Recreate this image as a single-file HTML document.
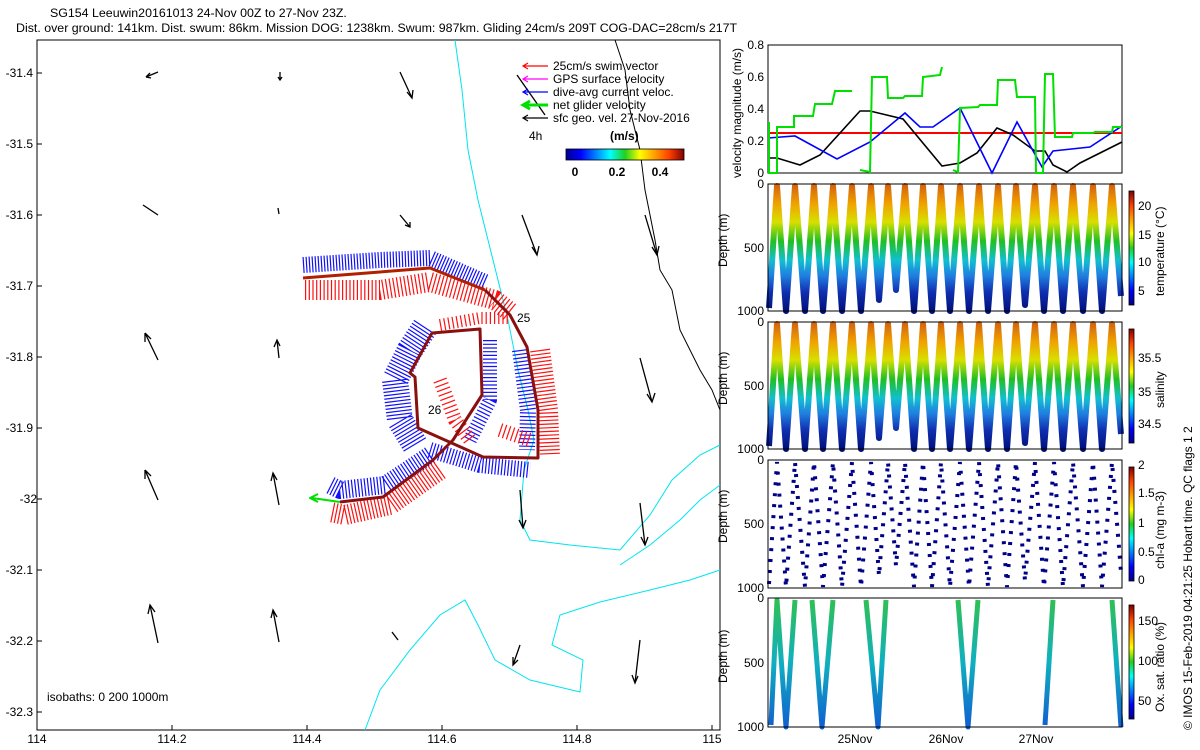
<!DOCTYPE html>
<html><head><meta charset="utf-8"><style>
html,body{margin:0;padding:0;background:#fff;}
svg{display:block;font-family:"Liberation Sans",sans-serif;}
text{font-size:12px;fill:#000;}
</style></head><body>
<svg width="1200" height="750" viewBox="0 0 1200 750" xmlns="http://www.w3.org/2000/svg">
<defs>
<linearGradient id="jetv" x1="0" y1="1" x2="0" y2="0">
<stop offset="0" stop-color="#00008f"/><stop offset="0.125" stop-color="#0000ff"/><stop offset="0.375" stop-color="#00ffff"/><stop offset="0.5" stop-color="#20d020"/><stop offset="0.625" stop-color="#ffff00"/><stop offset="0.875" stop-color="#ff4000"/><stop offset="1" stop-color="#800000"/>
</linearGradient>
<linearGradient id="jeth" x1="0" y1="0" x2="1" y2="0">
<stop offset="0" stop-color="#00008f"/><stop offset="0.125" stop-color="#0000ff"/><stop offset="0.375" stop-color="#00ffff"/><stop offset="0.5" stop-color="#20d020"/><stop offset="0.625" stop-color="#ffff00"/><stop offset="0.875" stop-color="#ff4000"/><stop offset="1" stop-color="#800000"/>
</linearGradient>
<linearGradient id="prof" gradientUnits="userSpaceOnUse" x1="0" y1="184" x2="0" y2="311">
<stop offset="0" stop-color="#d06010"/><stop offset="0.15" stop-color="#f0a000"/><stop offset="0.3" stop-color="#d8e000"/><stop offset="0.45" stop-color="#20c020"/><stop offset="0.6" stop-color="#10c0d0"/><stop offset="0.72" stop-color="#2080e0"/><stop offset="0.85" stop-color="#1030b0"/><stop offset="1" stop-color="#00107a"/>
</linearGradient>
<linearGradient id="oxg" gradientUnits="userSpaceOnUse" x1="0" y1="598" x2="0" y2="727">
<stop offset="0" stop-color="#30c050"/><stop offset="0.5" stop-color="#10b0c0"/><stop offset="1" stop-color="#1060d0"/>
</linearGradient>
</defs>

<!-- titles -->
<text x="50" y="17" style="font-size:12.4px">SG154 Leeuwin20161013 24-Nov 00Z to 27-Nov 23Z.</text>
<text x="16" y="32" style="font-size:12.4px">Dist. over ground: 141km. Dist. swum: 86km. Mission DOG: 1238km. Swum: 987km. Gliding 24cm/s 209T COG-DAC=28cm/s 217T</text>

<!-- map frame -->
<rect x="37" y="40" width="683" height="690" fill="none" stroke="#000" stroke-width="1"/>
<g text-anchor="end">
<text x="33" y="77">-31.4</text><text x="33" y="148">-31.5</text><text x="33" y="219">-31.6</text><text x="33" y="290">-31.7</text><text x="33" y="361">-31.8</text><text x="33" y="432">-31.9</text><text x="37" y="503">-32</text><text x="33" y="574">-32.1</text><text x="33" y="645">-32.2</text><text x="33" y="716">-32.3</text>
</g>
<g text-anchor="middle">
<text x="37" y="743">114</text><text x="172" y="743">114.2</text><text x="307" y="743">114.4</text><text x="442" y="743">114.6</text><text x="577" y="743">114.8</text><text x="712" y="743">115</text>
</g>
<g stroke="#000" stroke-width="1">
<line x1="37" y1="73" x2="42" y2="73"/><line x1="37" y1="144" x2="42" y2="144"/><line x1="37" y1="215" x2="42" y2="215"/><line x1="37" y1="286" x2="42" y2="286"/><line x1="37" y1="357" x2="42" y2="357"/><line x1="37" y1="428" x2="42" y2="428"/><line x1="37" y1="499" x2="42" y2="499"/><line x1="37" y1="570" x2="42" y2="570"/><line x1="37" y1="641" x2="42" y2="641"/><line x1="37" y1="712" x2="42" y2="712"/>
<line x1="172" y1="730" x2="172" y2="725"/><line x1="307" y1="730" x2="307" y2="725"/><line x1="442" y1="730" x2="442" y2="725"/><line x1="577" y1="730" x2="577" y2="725"/><line x1="712" y1="730" x2="712" y2="725"/>
</g>

<!-- isobaths -->
<g fill="none" stroke="#00e5ee" stroke-width="1">
<path d="M455,40 L462,90 L468,150 L478,200 L488,240 L498,280 L508,320 L518,370 L528,410 L534,440 L524,470 L520,520 L530,540 L570,545 L620,550 L650,515 L672,480 L700,455 L720,445"/>
<path d="M720,485 L700,500 L680,520 L650,545 L620,565"/>
<path d="M365,730 L380,690 L410,650 L440,615 L465,600 L478,625 L495,660 L530,680 L580,692 L583,660 L552,645 L560,615 L600,602 L650,590 L690,580 L720,570"/>
</g>
<text x="47" y="701">isobaths: 0   200  1000m</text>

<!-- sfc black track line -->
<path d="M615,40 L625,70 L630,110 L640,150 L645,190 L655,240 L660,270 L672,290 L680,330 L690,350 L700,370 L712,390 L720,410" fill="none" stroke="#000" stroke-width="1"/>

<!-- black geo arrows -->
<g stroke="#000" stroke-width="1.3" fill="none">
<path d="M158,72 L146,77 M146,77 L150,73 M146,77 L151,78"/>
<path d="M280,72 L280,80 M278,77 L280,80 L282,77"/>
<path d="M400,72 L412,98 M407,92 L412,98 L413,90"/>
<path d="M143,205 L158,215"/>
<path d="M278,208 L279,214"/>
<path d="M400,215 L410,227 M405,225 L410,227 L410,222"/>
<path d="M522,215 L537,255 M532,247 L537,255 L539,246"/>
<path d="M645,215 L657,255 M652,247 L657,255 L659,246"/>
<path d="M158,360 L145,333 M145,333 L145,342 M145,333 L151,339"/>
<path d="M279,358 L277,340 M274,347 L277,340 L280,346"/>
<path d="M640,358 L652,402 M647,394 L652,402 L655,393"/>
<path d="M158,500 L145,470 M145,470 L145,479 M145,470 L151,476"/>
<path d="M279,505 L273,473 M271,481 L273,473 L277,480"/>
<path d="M520,490 L523,528 M519,520 L523,528 L526,520"/>
<path d="M640,503 L645,545 M641,537 L645,545 L648,537"/>
<path d="M158,643 L150,605 M148,614 L150,605 L155,612"/>
<path d="M279,642 L273,610 M271,618 L273,610 L277,617"/>
<path d="M398,640 L392,632"/>
<path d="M520,645 L513,665 M513,657 L513,665 L518,660"/>
<path d="M640,640 L635,683 M632,675 L635,683 L638,676"/>
<path d="M517,75 L545,115"/>
</g>

<!-- glider track fans -->
<g fill="none" stroke-linejoin="round">
<path d="M303,265 L380,260 L430,258 L485,282" stroke="#1010ff" stroke-width="16" stroke-dasharray="1.2 1.8"/>
<path d="M305,290 L380,290 L430,282 L495,300 L510,312" stroke="#ff1010" stroke-width="20" stroke-dasharray="1.2 2.5"/>
<path d="M425,327 L410,350 L395,380 L400,420 L415,445" stroke="#1010ff" stroke-width="26" stroke-dasharray="1.2 2.2"/>
<path d="M440,325 L480,318 L510,318" stroke="#ff1010" stroke-width="12" stroke-dasharray="1.2 3"/>
<path d="M490,340 L490,400 L470,440" stroke="#1010ff" stroke-width="14" stroke-dasharray="1.2 2.5"/>
<path d="M520,350 L528,410 L527,450" stroke="#1010ff" stroke-width="16" stroke-dasharray="1.2 2.5"/>
<path d="M540,350 L548,410 L550,455" stroke="#ff1010" stroke-width="20" stroke-dasharray="1.2 2.5"/>
<path d="M440,380 L455,420 L470,440" stroke="#ff1010" stroke-width="14" stroke-dasharray="1.2 3.5"/>
<path d="M430,450 L480,465 L530,470" stroke="#1010ff" stroke-width="16" stroke-dasharray="1.2 2"/>
<path d="M500,430 L530,440" stroke="#ff1010" stroke-width="14" stroke-dasharray="1.2 3"/>
<path d="M430,455 L385,485 L340,490 L330,485" stroke="#1010ff" stroke-width="18" stroke-dasharray="1.2 2"/>
<path d="M440,470 L390,505 L345,515 L330,512" stroke="#ff1010" stroke-width="20" stroke-dasharray="1.2 2.2"/>
<path d="M303,278 L380,272 L430,268 L485,290" stroke="#b02000" stroke-width="3"/>
<path d="M432,333 L480,329 L482,395 L453,440 L433,460 L383,497 L340,502" stroke="#8a1010" stroke-width="3"/>
<path d="M485,290 L510,315 L527,347 L538,410 L538,458 L483,457 L418,428 L415,377 L410,373 L432,333" stroke="#8a1010" stroke-width="3"/>
<path d="M340,502 L312,498 M318,494 L310,498 L318,502" stroke="#00e000" stroke-width="2"/>
</g>
<text x="517" y="322">25</text>
<text x="428" y="414">26</text>

<!-- legend -->
<g stroke-width="1.2" fill="none">
<path d="M548,66 L523,66 M528,63 L523,66 L528,69" stroke="#ff0000"/>
<path d="M548,79 L523,79 M528,76 L523,79 L528,82" stroke="#ff00ff"/>
<path d="M548,92 L523,92 M528,89 L523,92 L528,95" stroke="#0000ff"/>
<path d="M548,105 L523,105 M530,101 L523,105 L530,109" stroke="#00e000" stroke-width="3"/>
<path d="M548,118 L523,118 M528,115 L523,118 L528,121" stroke="#000"/>
</g>
<text x="553" y="70">25cm/s swim vector</text>
<text x="553" y="83">GPS surface velocity</text>
<text x="553" y="96">dive-avg current veloc.</text>
<text x="553" y="109">net glider velocity</text>
<text x="553" y="122">sfc geo. vel. 27-Nov-2016</text>
<text x="529" y="140">4h</text>
<text x="610" y="140" font-weight="bold">(m/s)</text>
<rect x="566" y="149" width="118" height="11" fill="url(#jeth)" stroke="#000" stroke-width="0.8"/>
<text x="575" y="176" font-weight="bold" text-anchor="middle">0</text>
<text x="617" y="176" font-weight="bold" text-anchor="middle">0.2</text>
<text x="660" y="176" font-weight="bold" text-anchor="middle">0.4</text>

<!-- velocity panel -->
<rect x="768" y="45" width="354" height="128" fill="none" stroke="#000"/>
<g text-anchor="end">
<text x="764" y="49">0.8</text><text x="764" y="81">0.6</text><text x="764" y="113">0.4</text><text x="764" y="145">0.2</text><text x="764" y="177">0</text>
</g>
<text transform="translate(741,178) rotate(-90)">velocity magnitude (m/s)</text>
<line x1="768" y1="133" x2="1122" y2="133" stroke="#ff0000" stroke-width="2"/>
<polyline fill="none" stroke="#000" stroke-width="1.6" points="768,158 777,158 800,165 820,155 860,111 870,111 903,119 942,166 960,163 977,153 997,128 1013,135 1035,151 1045,151 1053,165 1067,172 1080,163 1122,142"/>
<polyline fill="none" stroke="#0000ff" stroke-width="1.6" points="768,138 795,136 837,159 870,142 905,113 920,127 933,127 960,108 992,173 1017,122 1042,167 1053,151 1090,147 1122,126"/>
<g fill="none" stroke="#00e000" stroke-width="2">
<polyline points="769,122 769,173 777,173 777,127 794,127 794,116 813,116 815,104 832,104 835,91 852,91"/>
<polyline points="860,170 870,172 872,77 887,77 888,98 903,98 905,96 922,96 923,77 940,75 942,67"/>
<polyline points="953,170 958,172 960,108 978,107 980,105 997,105 998,80 1015,80 1017,97 1035,97 1036,173 1043,173 1045,74 1053,74 1055,137 1072,137 1073,133 1093,133 1095,132 1112,132 1113,127 1122,127"/>
</g>

<!-- profile panels -->
<g id="pp">
<polyline fill="none" stroke="url(#prof)" stroke-width="6" stroke-linejoin="round" points="769,308 777,186 786,311 795,186 805,311 814,186 823,311 833,186 842,311 852,186 861,311 871,186 879,300 888,186 896,290 905,186 914,311 923,186 932,311 941,186 950,311 960,186 969,311 979,186 988,311 998,186 1007,311 1016,186 1025,305 1035,186 1044,311 1054,186 1063,311 1073,186 1083,311 1093,186 1102,311 1112,186 1121,296"/>
</g>
<use href="#pp" transform="translate(0,138)"/>
<g transform="translate(0,276)">
<polyline fill="none" stroke="#000088" stroke-width="4" stroke-dasharray="3 8" points="769,308 777,186 786,311 795,186 805,311 814,186 823,311 833,186 842,311 852,186 861,311 871,186 879,300 888,186 896,290 905,186 914,311 923,186 932,311 941,186 950,311 960,186 969,311 979,186 988,311 998,186 1007,311 1016,186 1025,305 1035,186 1044,311 1054,186 1063,311 1073,186 1083,311 1093,186 1102,311 1112,186 1121,296"/>
</g>
<g fill="none" stroke="url(#oxg)" stroke-width="5" stroke-linejoin="round">
<polyline points="771,725 777,600 786,727 795,600"/>
<polyline points="812,600 822,727 833,600"/>
<polyline points="866,600 878,727 886,600"/>
<polyline points="958,600 968,727 978,600"/>
<polyline points="1045,725 1053,600"/>
<polyline points="1112,600 1121,727"/>
</g>
<g fill="none" stroke="#000">
<rect x="768" y="184" width="354" height="127"/>
<rect x="768" y="322" width="354" height="127"/>
<rect x="768" y="460" width="354" height="128"/>
<rect x="768" y="598" width="354" height="129"/>
</g>
<g text-anchor="end">
<text x="764" y="188">0</text><text x="764" y="252">500</text><text x="764" y="315">1000</text>
<text x="764" y="326">0</text><text x="764" y="390">500</text><text x="764" y="453">1000</text>
<text x="764" y="464">0</text><text x="764" y="528">500</text><text x="764" y="592">1000</text>
<text x="764" y="602">0</text><text x="764" y="667">500</text><text x="764" y="731">1000</text>
</g>
<text transform="translate(727,267) rotate(-90)">Depth (m)</text>
<text transform="translate(727,405) rotate(-90)">Depth (m)</text>
<text transform="translate(727,543) rotate(-90)">Depth (m)</text>
<text transform="translate(727,683) rotate(-90)">Depth (m)</text>
<g text-anchor="middle">
<text x="855" y="743">25Nov</text><text x="946" y="743">26Nov</text><text x="1036" y="743">27Nov</text>
</g>

<!-- colorbars -->
<g stroke="#000" stroke-width="0.8">
<rect x="1129" y="191" width="5" height="114" fill="url(#jetv)"/>
<rect x="1129" y="329" width="5" height="114" fill="url(#jetv)"/>
<rect x="1129" y="467" width="5" height="114" fill="url(#jetv)"/>
<rect x="1129" y="605" width="5" height="114" fill="url(#jetv)"/>
</g>
<text x="1138" y="210">20</text><text x="1138" y="239">15</text><text x="1138" y="266">10</text><text x="1138" y="295">5</text>
<text transform="translate(1164,296) rotate(-90)">temperature (°C)</text>
<text x="1138" y="362">35.5</text><text x="1138" y="396">35</text><text x="1138" y="428">34.5</text>
<text transform="translate(1164,408) rotate(-90)">salinity</text>
<text x="1138" y="469">2</text><text x="1138" y="497">1.5</text><text x="1138" y="527">1</text><text x="1138" y="556">0.5</text><text x="1138" y="584">0</text>
<text transform="translate(1164,569) rotate(-90)">chl-a (mg m-3)</text>
<text x="1138" y="625">150</text><text x="1138" y="665">100</text><text x="1138" y="705">50</text>
<text transform="translate(1164,712) rotate(-90)">Ox. sat. ratio (%)</text>
<text transform="translate(1192,730) rotate(-90)">© IMOS 15-Feb-2019 04:21:25 Hobart time. QC flags 1  2</text>
</svg>
</body></html>
